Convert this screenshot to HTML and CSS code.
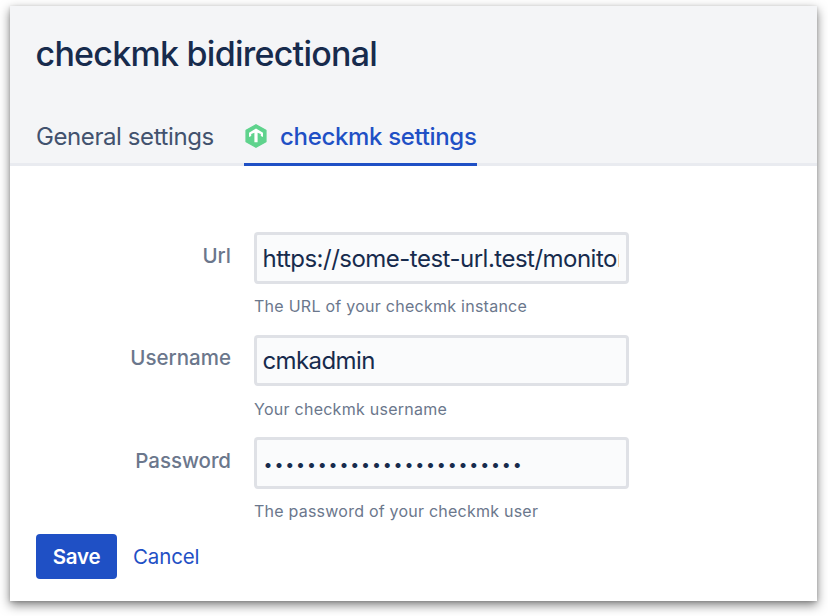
FILE: index.html
```html
<!DOCTYPE html>
<html lang="en">
<head>
<meta charset="utf-8">
<title>checkmk bidirectional</title>
<link rel="stylesheet" href="styles.css">
</head>
<body>
<main class="window">
  <header class="header">
    <h1 class="title">checkmk bidirectional</h1>
    <nav class="tabs">
      <a class="tab tab-general">General settings</a>
      <a class="tab tab-active">
        <svg class="logo" viewBox="0 0 24 24" width="24" height="24"><path d="M12 .8 21.9 6.3V17.7L12 23.2 2.1 17.7V6.3Z" fill="#5fd38d" stroke="#5fd38d" stroke-width="1.4" stroke-linejoin="round"/><path d="M12 4.6 19 8.8V13L16.8 12V10L13.6 8.8V18.3H10.4V8.8L7.2 10V12L5 13V8.8Z" fill="#fff"/></svg>
        <span class="tab-label">checkmk settings</span>
      </a>
    </nav>
  </header>
  <form class="form">
    <div class="row">
      <label class="label">Url</label>
      <div class="field"><div class="input"><span class="value value-url">https://some-test-url.test/monitor</span></div><p class="hint">The URL of your checkmk instance</p></div>
    </div>
    <div class="row">
      <label class="label label-user">Username</label>
      <div class="field"><div class="input input-user"><span class="value value-user">cmkadmin</span></div><p class="hint hint-user">Your checkmk username</p></div>
    </div>
    <div class="row">
      <label class="label label-pass">Password</label>
      <div class="field"><div class="input"><span class="value dots">••••••••••••••••••••••••</span></div><p class="hint hint-pass">The password of your checkmk user</p></div>
    </div>
    <div class="actions"><button class="save" type="button">Save</button><a class="cancel">Cancel</a></div>
  </form>
</main>
</body>
</html>
```
FILE: styles.css
```css
* { box-sizing: border-box; }
body { margin: 0; padding: 6px 11px 15px 10px; height: 616px; background: #fff; font-family: Inter, "Liberation Sans", sans-serif; overflow: hidden; }
.window { height: 595px; background: #fff; box-shadow: 0 4px 10px rgba(0,0,0,.5), 0 1px 3px rgba(0,0,0,.15); }
.header { height: 160px; padding: 26px 26px 0; background: #f4f5f7; border-bottom: 3px solid #e9ebf0; }
.title { margin: 0 0 0 -.5px; height: 44px; line-height: 44px; font-size: 34px; font-weight: 500; letter-spacing: -.74px; color: #172b4d; white-space: nowrap; }
.tabs { display: flex; margin-top: 35px; height: 55px; gap: 30px; }
.tab { display: flex; height: 55px; padding-top: 11px; line-height: 30px; font-size: 24px; color: #42526e; white-space: nowrap; }
.tab-general { width: 178px; letter-spacing: -.41px; }
.tab-active { width: 233px; color: #1f50c5; font-weight: 500; letter-spacing: -.33px; border-bottom: 3px solid #1f50c5; }
.logo { flex: none; margin: 2px 12px 0 0; }
.form { padding: 66px 26px 0; }
.row { display: flex; height: 102.5px; }
.label { width: 195px; margin-right: 23px; padding-top: 9px; line-height: 30px; text-align: right; font-size: 20.5px; font-weight: 500; color: #6b778c; }
.label-user { padding-top: 8px; }
.label-pass { letter-spacing: -.05px; }
.field { width: 375px; }
.input { height: 52px; padding: 0 6px 0 5px; border: 3px solid #dfe1e6; border-radius: 4px; background: #fafbfc; }
.input-user { height: 51px; }
.value { display: block; overflow: hidden; height: 45px; line-height: 46px; font-size: 24px; color: #172b4d; white-space: nowrap; }
.value-url { margin-right: 1px; padding-left: .5px; letter-spacing: -.51px; line-height: 47px; }
.value-user { padding-left: .5px; letter-spacing: -.6px; }
.dots { padding-left: 1.6px; line-height: 48px; font-size: 16px; letter-spacing: 1.83px; }
.hint { margin: 10px 0 0; line-height: 24px; font-size: 16px; letter-spacing: .26px; color: #6b778c; white-space: nowrap; }
.hint-user { margin-top: 11px; }
.hint-pass { letter-spacing: .23px; }
.actions { display: flex; margin-top: -6px; align-items: center; }
.save { width: 81px; height: 45px; padding: 0; border: 0; border-radius: 4px; background: #1f50c5; color: #fff; font: 600 20.5px Inter, sans-serif; letter-spacing: -.25px; }
.cancel { margin-left: 16px; color: #1f50c5; font-size: 20.5px; letter-spacing: -.15px; }
```
